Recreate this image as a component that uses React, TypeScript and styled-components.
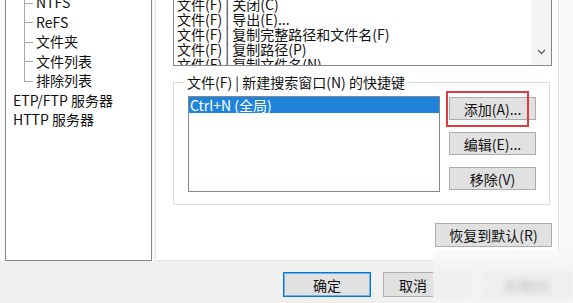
import React from "react";
import styled, { createGlobalStyle } from "styled-components";

const GlobalStyle = createGlobalStyle`
  html, body {
    margin: 0;
    padding: 0;
    background: #f0f0f0;
  }
  body {
    font-family: "Noto Sans CJK SC", "Microsoft YaHei", sans-serif;
    font-size: 14px;
    color: #111;
  }
  * {
    box-sizing: border-box;
  }
`;

const StDialog = styled.div`
  position: relative;
  width: 573px;
  height: 303px;
  overflow: hidden;
  display: flex;
  flex-direction: column;
  background: #f0f0f0;
`;

const StMain = styled.div`
  display: flex;
  height: 261px;
  padding-left: 5px;
  background: #f9f9f9;
`;

const StTree = styled.div`
  width: 147px;
  height: 261px;
  border: 1px solid #828790;
  border-top: none;
  background: #fff;
  overflow: hidden;
  margin-right: 3px;
`;

const StTreeList = styled.div`
  margin-top: -7px;
`;

const StTreeRow = styled.div<{ $child?: boolean; $last?: boolean }>`
  position: relative;
  height: 19.5px;
  line-height: 19.5px;
  white-space: nowrap;
  padding-left: ${(p) => (p.$child ? "30px" : "7px")};

  &::before {
    content: ${(p) => (p.$child ? '""' : "none")};
    position: absolute;
    left: 18px;
    top: 0;
    height: ${(p) => (p.$last ? "50%" : "100%")};
    border-left: 1px solid #a8a8a8;
  }
  &::after {
    content: ${(p) => (p.$child ? '""' : "none")};
    position: absolute;
    left: 18px;
    top: 50%;
    width: 9px;
    border-top: 1px solid #a8a8a8;
  }
`;

const StTabPage = styled.div`
  width: 404px;
  height: 261px;
  border: 1px solid #e3e3e3;
  border-top: none;
  background: #fff;
  padding: 0 6px 0 17px;
  display: flex;
  flex-direction: column;
`;

const StTopList = styled.div`
  height: 66px;
  border: 1px solid #828790;
  border-top: none;
  display: flex;
  overflow: hidden;
`;

const StTopItems = styled.div`
  flex: 1;
  margin-top: -3px;
  padding-left: 3px;
  line-height: 15px;
  white-space: nowrap;
  overflow: hidden;
`;

const StScrollbar = styled.div`
  width: 20px;
  background: #f4f4f4;
  display: flex;
  align-items: flex-end;
  justify-content: center;
  padding-bottom: 10px;
`;

const StGroup = styled.div`
  position: relative;
  margin-top: 16px;
  width: 377px;
  height: 123px;
  border: 1px solid #dcdcdc;
  display: flex;
  align-items: flex-start;
  gap: 9px;
  padding: 13px 0 0 14px;
`;

const StGroupTitle = styled.span`
  position: absolute;
  top: -9px;
  left: 11px;
  padding: 0 2px;
  background: #fff;
  line-height: 17px;
  white-space: nowrap;
`;

const StKeyList = styled.div`
  width: 252px;
  height: 96px;
  border: 1px solid #828790;
  background: #fff;
`;

const StKeyItem = styled.div<{ $selected?: boolean }>`
  height: 16px;
  line-height: 16px;
  padding-left: 1px;
  white-space: nowrap;
  background: ${(p) => (p.$selected ? "#1f84d9" : "transparent")};
  color: ${(p) => (p.$selected ? "#fff" : "#000")};
`;

const StButtonColumn = styled.div`
  position: relative;
  display: flex;
  flex-direction: column;
  gap: 12px;
  margin-top: 1px;
`;

const StButton = styled.button<{
  $w: number;
  $h: number;
  $default?: boolean;
  $left?: boolean;
}>`
  width: ${(p) => p.$w}px;
  height: ${(p) => p.$h}px;
  margin: 0;
  padding: ${(p) => (p.$left ? "0 0 0 15px" : "0")};
  display: flex;
  align-items: center;
  justify-content: ${(p) => (p.$left ? "flex-start" : "center")};
  font-family: inherit;
  font-size: 14px;
  line-height: 1;
  color: #111;
  background: #e1e1e1;
  border: 1px solid ${(p) => (p.$default ? "#0078d7" : "#adadad")};
  box-shadow: ${(p) => (p.$default ? "inset 0 0 0 1px #6fb0e6" : "none")};
  white-space: nowrap;
`;

const StRedMark = styled.div`
  position: absolute;
  left: -3px;
  top: -6px;
  width: 83px;
  height: 36px;
  border: 2px solid #e4393f;
  pointer-events: none;
`;

const StRestoreRow = styled.div`
  display: flex;
  justify-content: flex-end;
  margin-top: 18px;
`;

const StBottomBar = styled.div`
  height: 42px;
  display: flex;
  justify-content: flex-end;
  gap: 12px;
  padding: 11px 2px 0 0;
`;

const StWatermark = styled.div`
  position: absolute;
  left: 433px;
  top: 250px;
  right: 0;
  bottom: 0;
  background: rgba(246, 246, 246, 0.7);
  backdrop-filter: blur(3px);
`;

const treeRows = [
  { label: "NTFS", child: true },
  { label: "ReFS", child: true },
  { label: "文件夹", child: true },
  { label: "文件列表", child: true },
  { label: "排除列表", child: true, last: true },
  { label: "ETP/FTP 服务器" },
  { label: "HTTP 服务器" },
];

const commands = [
  "文件(F) | 关闭(C)",
  "文件(F) | 导出(E)...",
  "文件(F) | 复制完整路径和文件名(F)",
  "文件(F) | 复制路径(P)",
  "文件(F) | 复制文件名(N)",
];

function Chevron() {
  return (
    <svg width="9" height="6" viewBox="0 0 9 6">
      <path d="M1 1 L4.5 4.5 L8 1" fill="none" stroke="#606060" strokeWidth="1.3" />
    </svg>
  );
}

export default function App() {
  return (
    <>
      <GlobalStyle />
      <StDialog>
        <StMain>
          <StTree>
            <StTreeList>
              {treeRows.map((row) => (
                <StTreeRow key={row.label} $child={row.child} $last={row.last}>
                  {row.label}
                </StTreeRow>
              ))}
            </StTreeList>
          </StTree>
          <StTabPage>
            <StTopList>
              <StTopItems>
                {commands.map((c) => (
                  <div key={c}>{c}</div>
                ))}
              </StTopItems>
              <StScrollbar>
                <Chevron />
              </StScrollbar>
            </StTopList>
            <StGroup>
              <StGroupTitle>文件(F) | 新建搜索窗口(N) 的快捷键</StGroupTitle>
              <StKeyList>
                <StKeyItem $selected>Ctrl+N (全局)</StKeyItem>
              </StKeyList>
              <StButtonColumn>
                <StButton $w={87} $h={23}>添加(A)...</StButton>
                <StButton $w={87} $h={23}>编辑(E)...</StButton>
                <StButton $w={87} $h={23}>移除(V)</StButton>
                <StRedMark />
              </StButtonColumn>
            </StGroup>
            <StRestoreRow>
              <StButton $w={117} $h={24}>恢复到默认(R)</StButton>
            </StRestoreRow>
          </StTabPage>
        </StMain>
        <StBottomBar>
          <StButton $w={88} $h={25} $default>确定</StButton>
          <StButton $w={88} $h={25} $left>取消</StButton>
          <StButton $w={88} $h={25}>应用(A)</StButton>
        </StBottomBar>
        <StWatermark />
      </StDialog>
    </>
  );
}
